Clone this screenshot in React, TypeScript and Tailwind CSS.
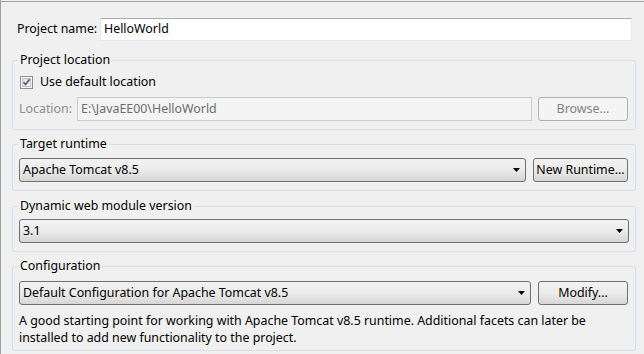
import React from "react";

const font = { fontFamily: '"Noto Sans", "Liberation Sans", sans-serif' };

function Arrow() {
  return (
    <svg width="7" height="4" viewBox="0 0 7 4" className="shrink-0">
      <path d="M0 0H7L3.5 4Z" fill="#000" />
    </svg>
  );
}

function Combo({ text, className = "" }: { text: string; className?: string }) {
  return (
    <div
      className={`flex h-[24px] items-center justify-between rounded-[3px] border border-[#707070] bg-gradient-to-b from-[#f2f2f2] via-[#ebebeb] to-[#d6d6d6] pl-[3px] pr-[5px] text-black ${className}`}
    >
      <span className="leading-none">{text}</span>
      <Arrow />
    </div>
  );
}

function Btn({ text, disabled = false, className = "" }: { text: string; disabled?: boolean; className?: string }) {
  return (
    <div
      className={`flex h-[24px] items-center justify-center rounded-[3px] border leading-none ${
        disabled
          ? "border-[#adb2b5] bg-[#f4f4f4] text-[#838383]"
          : "border-[#707070] bg-gradient-to-b from-[#f2f2f2] via-[#ebebeb] to-[#d6d6d6] text-black"
      } ${className}`}
    >
      {text}
    </div>
  );
}

function Group({ title, children, className = "" }: { title: string; children: React.ReactNode; className?: string }) {
  return (
    <div className={`relative ml-[11px] mr-[8px] rounded-[3px] border border-[#d5dfe5] ${className}`}>
      <span className="absolute -top-[9px] left-[5px] bg-[#f0f0f0] px-[2px] leading-[16px] text-black">
        {title}
      </span>
      {children}
    </div>
  );
}

export default function App() {
  return (
    <div
      style={font}
      className="flex h-[354px] w-[644px] flex-col overflow-hidden border-l border-[#a0a0a0] bg-[#f0f0f0] text-[12.4px] text-black"
    >
      <div className="mt-px h-px bg-[#a0a0a0]" />
      {/* Project name */}
      <div className="mt-[16px] flex items-center pl-[16px]">
        <span className="w-[83px] leading-none">Project name:</span>
        <div className="flex h-[23px] w-[532px] items-center border border-[#e3e9ef] border-t-[#abadb3] bg-white pl-[3px] leading-none">
          HelloWorld
        </div>
      </div>

      {/* Project location */}
      <Group title="Project location" className="mt-[19px] h-[70px]">
        <div className="mt-[15px] flex items-center pl-[7px]">
          <svg width="13" height="13" viewBox="0 0 13 13" className="shrink-0">
            <defs>
              <linearGradient id="cb" x1="0" y1="0" x2="1" y2="1">
                <stop offset="0" stopColor="#dcdcdc" />
                <stop offset="1" stopColor="#f8f8f8" />
              </linearGradient>
            </defs>
            <rect x="0.5" y="0.5" width="12" height="12" fill="#fff" stroke="#8e8f8f" />
            <rect x="2.5" y="2.5" width="8" height="8" fill="url(#cb)" stroke="#c2c2c2" />
            <path d="M3.5 6.3L5.6 8.6L9.6 3.2" fill="none" stroke="#4d5a76" strokeWidth="1.6" />
          </svg>
          <span className="ml-[7px] leading-none">Use default location</span>
        </div>
        <div className="mt-[8px] flex items-center pl-[6px] pr-[7px]">
          <span className="w-[58px] leading-none text-[#8d8d8d]">Location:</span>
          <div className="flex h-[24px] w-[455px] items-center border border-[#c9ccce] bg-[#f4f4f4] pl-[3px] leading-none text-[#6d6d6d]">
            E:\JavaEE00\HelloWorld
          </div>
          <Btn text="Browse..." disabled className="ml-[6px] flex-1" />
        </div>
      </Group>

      {/* Target runtime */}
      <Group title="Target runtime" className="mt-[14px] h-[47px]">
        <div className="mt-[13px] flex items-center pl-[6px] pr-[7px]">
          <Combo text="Apache Tomcat v8.5" className="w-[507px]" />
          <Btn text="New Runtime..." className="ml-[7px] flex-1" />
        </div>
      </Group>

      {/* Dynamic web module version */}
      <Group title="Dynamic web module version" className="mt-[15px] h-[46px]">
        <div className="mt-[12px] flex items-center pl-[6px] pr-[6px]">
          <Combo text="3.1" className="flex-1" />
        </div>
      </Group>

      {/* Configuration */}
      <Group title="Configuration" className="mt-[14px] h-[85px]">
        <div className="mt-[14px] flex items-center pl-[6px] pr-[7px]">
          <Combo text="Default Configuration for Apache Tomcat v8.5" className="w-[512px]" />
          <Btn text="Modify..." className="ml-[7px] flex-1" />
        </div>
        <p className="mt-[7px] pl-[6px] pr-[10px] leading-[17px]">
          A good starting point for working with Apache Tomcat v8.5 runtime. Additional facets can later be
          installed to add new functionality to the project.
        </p>
      </Group>
    </div>
  );
}
